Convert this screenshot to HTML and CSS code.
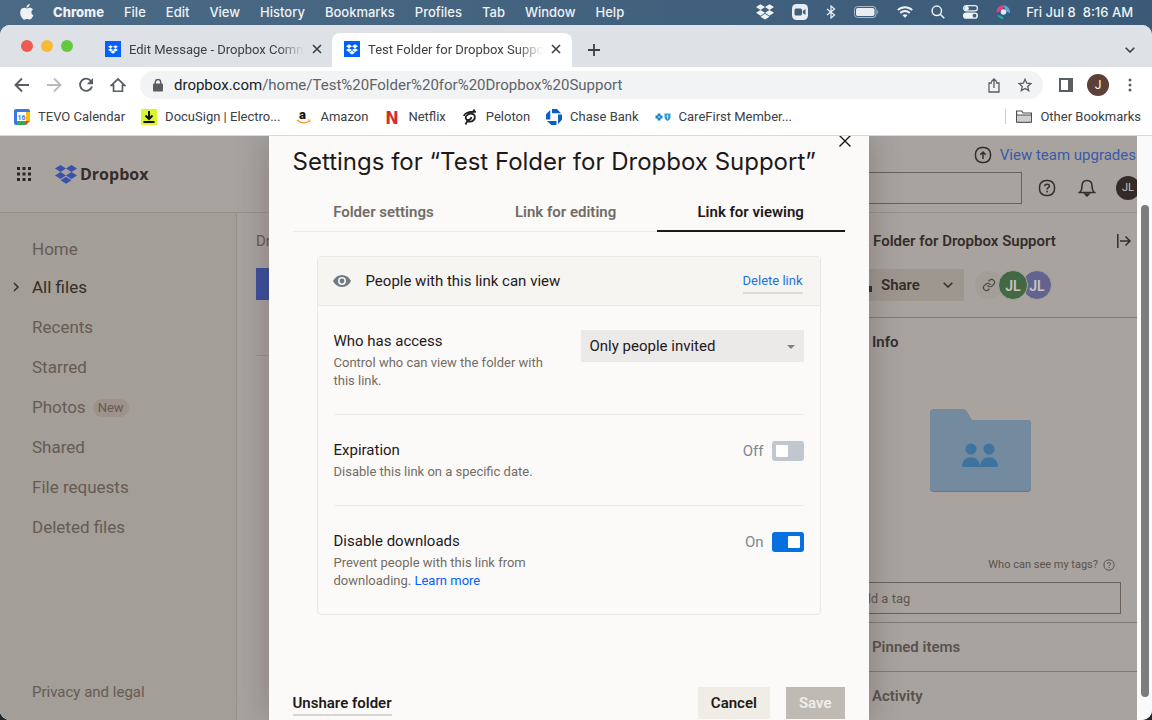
FILE: index.html
```html
<!DOCTYPE html>
<html lang="en">
<head>
<meta charset="utf-8">
<title>Test Folder for Dropbox Support</title>
<link rel="stylesheet" href="styles.css">
</head>
<body>
<svg class="defs" aria-hidden="true">
  <symbol id="dropbox" viewBox="0 0 44 38">
    <path d="M11 0L0 7l11 7 11-7zM33 0L22 7l11 7 11-7zM0 21l11 7 11-7-11-7zM33 14l-11 7 11 7 11-7zM11 30.500l11 7 11-7-11-7z"/>
  </symbol>
  <symbol id="cross" viewBox="0 0 12 12"><path d="M2 2l8 8M10 2l-8 8" fill="none" stroke="currentColor" stroke-width="1.600"/></symbol>
  <symbol id="help" viewBox="0 0 18 18">
    <rect x="1.500" y="1.500" width="15" height="15" rx="6.500" fill="none" stroke="currentColor" stroke-width="1.500"/>
    <path d="M6.600 7.200c.1-1.400 1.100-2 2.400-2s2.400.8 2.400 2c0 1.600-2.300 1.500-2.300 3.300" fill="none" stroke="currentColor" stroke-width="1.500"/>
    <rect x="8.300" y="11.800" width="1.600" height="1.600" fill="currentColor"/>
  </symbol>
</svg>

<header class="menubar">
  <svg class="apple" width="14" height="16" viewBox="0 0 14 16" fill="currentColor"><path d="M9.700 0c.1 1-.3 2-.9 2.600-.6.700-1.500 1.200-2.300 1.100-.1-.9.300-1.900.9-2.500C8 .5 9 .1 9.700 0zM13 5.400c-1 .6-1.600 1.600-1.600 2.800 0 1.300.8 2.500 2 3-.3.900-.7 1.700-1.200 2.400-.7 1-1.400 2-2.500 2s-1.400-.6-2.600-.6c-1.300 0-1.700.6-2.700.7-1.100 0-1.900-1.100-2.600-2.100C.3 11.600-.5 8 .9 5.700c.7-1.200 1.900-1.900 3.200-1.900 1.200 0 2 .7 3 .7s1.600-.7 3-.7c1.100 0 2.200.6 2.900 1.600z"/></svg>
  <nav class="menus"><b>Chrome</b><span>File</span><span>Edit</span><span>View</span><span>History</span><span>Bookmarks</span><span>Profiles</span><span>Tab</span><span>Window</span><span>Help</span></nav>
  <div class="status">
    <svg width="18" height="16" fill="currentColor"><use href="#dropbox"/></svg>
    <svg width="16" height="16" viewBox="0 0 16 16"><rect width="16" height="16" rx="4.500" fill="#e8edf1"/><rect x="2.500" y="4.500" width="7.500" height="7" rx="1.500" fill="#3f5f7c"/><path d="M10.800 7l2.700-2v6l-2.700-2z" fill="#3f5f7c"/></svg>
    <svg width="10" height="14" viewBox="0 0 10 14"><path d="M1 4l7.500 6L5 13V1l3.500 3L1 10" fill="none" stroke="currentColor" stroke-width="1.200"/></svg>
    <svg width="25" height="12" viewBox="0 0 25 12"><rect x=".5" y=".5" width="21.500" height="11" rx="3" fill="none" stroke="#a9b8c6"/><rect x="2" y="2" width="18.500" height="8" rx="1.800" fill="#e8edf1"/><path d="M23.300 4c1.300.6 1.300 3.400 0 4z" fill="#a9b8c6"/></svg>
    <svg width="16" height="12" viewBox="0 0 16 12" fill="none" stroke="currentColor" stroke-width="1.900"><path d="M.8 4.200c4-4 10.400-4 14.400 0M3.300 7c2.600-2.700 6.800-2.700 9.400 0"/><path d="M5.500 9.200c1.400-1.300 3.600-1.300 5 0L8 11.800z" fill="currentColor" stroke="none"/></svg>
    <svg width="14" height="14" viewBox="0 0 14 14" fill="none" stroke="currentColor" stroke-width="1.500"><circle cx="5.800" cy="5.800" r="4.700"/><path d="M9.200 9.200l4.100 4.100"/></svg>
    <svg width="15" height="14" viewBox="0 0 15 14"><rect x=".6" y=".6" width="13.800" height="5.200" rx="2.600" fill="none" stroke="currentColor" stroke-width="1.200"/><circle cx="3.600" cy="3.200" r="2.200" fill="currentColor"/><rect y="7.500" width="15" height="6.300" rx="3.100" fill="currentColor"/><circle cx="11.500" cy="10.700" r="1.900" fill="#3f5f7c"/></svg>
    <svg width="14" height="14" viewBox="0 0 14 14"><circle cx="7" cy="7" r="7" fill="#2d5a86"/><path d="M.5 8C-.5 3 4 0 8 .3c2 2-4 6-7.500 7.700z" fill="#d8457c"/><path d="M8 .3c4 .5 6.500 4 6 7.700-3 0-6-4-6-7.700z" fill="#5fa9c9"/><path d="M1 10c3 0 6 1 7 3.900C5.500 14.500 2 13 1 10z" fill="#2aa38a"/><circle cx="7.500" cy="7" r="2.800" fill="#dfe8f5"/></svg>
    <span class="clock"><span>Fri Jul 8</span><span>8:16 AM</span></span>
  </div>
</header>

<div class="window">
  <div class="tabstrip">
    <div class="lights"><i class="red"></i><i class="amber"></i><i class="green"></i></div>
    <div class="tab">
      <span class="favicon"><svg width="10" height="9" fill="#fff"><use href="#dropbox"/></svg></span>
      <span class="tab-title">Edit Message - Dropbox Community</span>
      <button class="plain" aria-label="Close tab"><svg width="12" height="12"><use href="#cross"/></svg></button>
    </div>
    <div class="tab active">
      <span class="favicon"><svg width="12" height="11" fill="#fff"><use href="#dropbox"/></svg></span>
      <span class="tab-title">Test Folder for Dropbox Support</span>
      <button class="plain" aria-label="Close tab"><svg width="12" height="12"><use href="#cross"/></svg></button>
    </div>
    <button class="plain newtab" aria-label="New tab"><svg width="12" height="12" viewBox="0 0 12 12"><path d="M6 0v12M0 6h12" stroke="currentColor" stroke-width="1.800"/></svg></button>
    <button class="plain tabsearch" aria-label="Search tabs"><svg width="10" height="6" viewBox="0 0 10 6"><path d="M.7.7L5 5 9.300.7" fill="none" stroke="currentColor" stroke-width="1.600"/></svg></button>
  </div>

  <div class="toolbar">
    <button class="plain" aria-label="Back"><svg width="16" height="16" viewBox="0 0 16 16" fill="none" stroke="currentColor" stroke-width="1.900"><path d="M15 8H2M8 1.500L1.500 8 8 14.500"/></svg></button>
    <button class="plain off" aria-label="Forward"><svg width="16" height="16" viewBox="0 0 16 16" fill="none" stroke="currentColor" stroke-width="1.900"><path d="M1 8h13M8 1.500L14.500 8 8 14.500"/></svg></button>
    <button class="plain" aria-label="Reload"><svg width="16" height="16" viewBox="0 0 16 16"><path d="M13.200 4.300A6.100 6.100 0 1 0 14 9.500" fill="none" stroke="currentColor" stroke-width="1.900"/><path d="M15 1v6.300H8.800z" fill="currentColor"/></svg></button>
    <button class="plain" aria-label="Home"><svg width="16" height="16" viewBox="0 0 18 17"><path d="M1.500 9L9 1.800 16.500 9H14v6.500H4V9z" fill="none" stroke="currentColor" stroke-width="1.900"/></svg></button>
    <div class="omnibox">
      <svg width="10" height="13" viewBox="0 0 10 13"><rect y="4.500" width="10" height="8" rx="1" fill="currentColor"/><path d="M2.300 5V3.200a2.700 2.700 0 0 1 5.400 0V5" fill="none" stroke="currentColor" stroke-width="1.400"/></svg>
      <span class="url"><b>dropbox.com</b>/home/Test%20Folder%20for%20Dropbox%20Support</span>
      <svg width="12" height="15" viewBox="0 0 12 15" fill="none" stroke="currentColor" stroke-width="1.300"><path d="M4 5H1v9h10V5H8M6 10V1.200M3.200 3.800L6 1l2.800 2.800"/></svg>
      <svg width="14" height="14" viewBox="0 0 14 14"><path d="M7 1.300l1.700 3.900 4.200.4-3.200 2.800 1 4.200L7 10.400l-3.700 2.200 1-4.200L1.100 5.600l4.200-.4z" fill="none" stroke="currentColor" stroke-width="1.300"/></svg>
    </div>
    <button class="plain" aria-label="Side panel"><svg width="14" height="14" viewBox="0 0 14 14"><rect x="1" y="1" width="12" height="12" fill="none" stroke="currentColor" stroke-width="2"/><path d="M9 1h4v12H9z" fill="currentColor"/></svg></button>
    <span class="profile">J</span>
    <button class="plain kebab" aria-label="Menu"><svg width="4" height="14" viewBox="0 0 4 14" fill="currentColor"><circle cx="2" cy="2" r="1.500"/><circle cx="2" cy="7" r="1.500"/><circle cx="2" cy="12" r="1.500"/></svg></button>
  </div>

  <nav class="bookmarks">
    <a href="#"><svg width="16" height="16" viewBox="0 0 16 16"><path d="M0 2q0-2 2-2h12q2 0 2 2v10h-4v4H2q-2 0-2-2z" fill="#3b78e7"/><path d="M12 3h4v9h-4z" fill="#fbbc04"/><path d="M3 12h9v4H3z" fill="#34a853"/><path d="M12 12h4l-4 4z" fill="#ea4335"/><path d="M3 3h9v9H3z" fill="#fff"/><text x="3.500" y="10.500" class="cal">16</text></svg>TEVO Calendar</a>
    <a href="#"><svg width="16" height="16" viewBox="0 0 16 16"><path d="M0 0h16v16H0z" fill="#dcf52c"/><path d="M8 2v7M4.500 6.500L8 10l3.500-3.500M2.500 13h11" fill="none" stroke="#111" stroke-width="2"/></svg>DocuSign | Electro...</a>
    <a href="#"><svg width="16" height="16" viewBox="0 0 16 16"><text x="3" y="10" class="amz">a</text><path d="M1 11c4 3.500 9 3.500 12.500 1" fill="none" stroke="#f7981d" stroke-width="1.400"/><path d="M12 11c1.500-.3 2.300 0 2 2" fill="none" stroke="#f7981d"/></svg>Amazon</a>
    <a href="#"><svg width="16" height="16" viewBox="0 0 16 16"><text x="8" y="15" text-anchor="middle" class="nfx">N</text></svg>Netflix</a>
    <a href="#"><svg width="16" height="16" viewBox="0 0 16 16" fill="none" stroke="#222" stroke-width="1.800"><path d="M3.500 15.500L6 10.500M11 3L12.500.5M6 12.500c5 1 7.500-2.500 6.800-5.500-1-2.500-4.500-3-6.800-1.500C3.500 7 3 9 4.500 10.500c2 1.300 4.500 0 5-2.500M2 7c0-2 3-4.500 12-4.200"/></svg>Peloton</a>
    <a href="#"><svg width="16" height="16" viewBox="0 0 16 16" fill="#0b5fc1"><path d="M6 0h5l4 4.200H6zM16 5.500v5.200L12 15V5.500zM10.500 16H5.300L1 12h9.500zM0 10.500V5.200L4.300 1v9.500z"/></svg>Chase Bank</a>
    <a href="#"><svg width="16" height="16" viewBox="0 0 16 16"><path d="M2.500 4.500h3v2h2v3h-2v2h-3v-2h-2v-3h2z" fill="#1f86c8"/><circle cx="4" cy="8" r="1" fill="#9fd0ee"/><path d="M9.500 4.500h6v3.500c0 2-1.500 3-3 4-1.500-1-3-2-3-4z" fill="#2e9bd8"/><path d="M12.500 5.500v4.500M11.300 7.200h2.400" stroke="#cfe8f7" stroke-width=".8"/></svg>CareFirst Member...</a>
    <a href="#" class="other"><svg width="16" height="13" viewBox="0 0 16 13"><path d="M.6 12V1h5l1.500 2h8.300v9z" fill="#fff" stroke="#4b4e52" stroke-width="1.200"/><path d="M1 5h14v7H1z" fill="#cfcfcf"/><path d="M.6 5h14.800M.6 12.300h14.800" stroke="#4b4e52"/></svg>Other Bookmarks</a>
  </nav>

  <div class="viewport">
    <div class="page">
      <header class="app-header">
        <svg width="14" height="14" viewBox="0 0 14 14" fill="#2b2622"><path d="M0 0h3v3H0zM5.500 0h3v3h-3zM11 0h3v3h-3zM0 5.500h3v3H0zM5.500 5.500h3v3h-3zM11 5.500h3v3h-3zM0 11h3v3H0zM5.500 11h3v3h-3zM11 11h3v3h-3z"/></svg>
        <a href="#" class="logo"><svg width="22" height="19" fill="#3a52a8"><use href="#dropbox"/></svg>Dropbox</a>
        <div class="header-right">
          <a href="#" class="upgrade"><svg width="18" height="18" viewBox="0 0 18 18" fill="none" stroke="#342e2a" stroke-width="1.500"><rect x="1.500" y="1.500" width="15" height="15" rx="6.500"/><path d="M9 13V6M6.300 8.700L9 6l2.700 2.700"/></svg>View team upgrades</a>
          <div class="tools">
            <input type="text" class="search" aria-label="Search">
            <svg width="18" height="18"><use href="#help"/></svg>
            <svg width="18" height="18" viewBox="0 0 18 18" fill="none" stroke="currentColor" stroke-width="1.500"><path d="M1.500 13.500h15c-2-1.500-2.500-3-2.500-6.500C14 3.500 12 1.500 9 1.500S4 3.500 4 7c0 3.500-.5 5-2.500 6.500z"/><path d="M7 15h4L9 17z" fill="currentColor"/></svg>
            <span class="avatar ink">JL</span>
          </div>
        </div>
      </header>
      <div class="app-body">
        <aside class="sidebar">
          <nav>
            <a href="#">Home</a>
            <a href="#" class="current"><svg width="6" height="10" viewBox="0 0 6 10"><path d="M1 1l4 4-4 4" fill="none" stroke="currentColor" stroke-width="1.500"/></svg>All files</a>
            <a href="#">Recents</a>
            <a href="#">Starred</a>
            <a href="#">Photos<span class="new">New</span></a>
            <a href="#">Shared</a>
            <a href="#">File requests</a>
            <a href="#">Deleted files</a>
          </nav>
          <a href="#" class="legal">Privacy and legal</a>
        </aside>
        <main class="files">
          <div class="crumb">Dropbox</div>
          <button class="create">Create</button>
          <hr>
        </main>
        <aside class="details">
          <div class="details-title"><h2>Test Folder for Dropbox Support</h2>
            <svg width="14" height="14" viewBox="0 0 14 14" fill="none" stroke="currentColor" stroke-width="1.500"><path d="M.8 0v14M3 7h10M8.500 2.500L13 7l-4.500 4.500"/></svg></div>
          <div class="share-row">
            <button class="share"><svg width="14" height="14" viewBox="0 0 14 14" fill="currentColor"><circle cx="7" cy="3" r="3"/><path d="M1 14V8h13v6z"/></svg><span>Share</span><svg width="10" height="6" viewBox="0 0 10 6"><path d="M.7.7L5 5 9.300.7" fill="none" stroke="currentColor" stroke-width="1.500"/></svg></button>
            <div class="people">
              <span class="person linkchip"><svg width="14" height="14" viewBox="0 0 24 24" fill="none" stroke="#4b443f" stroke-width="2" stroke-linecap="round"><path d="M10 13a5 5 0 0 0 7.500.5l3-3a5 5 0 0 0-7-7l-1.700 1.700"/><path d="M14 11a5 5 0 0 0-7.500-.5l-3 3a5 5 0 0 0 7 7l1.700-1.700"/></svg></span>
              <span class="person green">JL</span><span class="person violet">JL</span>
            </div>
          </div>
          <section class="info">
            <h3>Info</h3>
            <svg class="folder" width="104" height="86" viewBox="0 0 104 86"><path d="M1 5.500Q1 1 5.500 1H33q3.500 0 5 3l4.500 8H98q4 0 4 4v64q0 4-4 4H5q-4 0-4-4z" fill="#5a7b94"/><path d="M1 5.500Q1 1 5.500 1H33q3.500 0 5 3l4.500 8H98q4 0 4 4v63q0 4-4 4H5q-4 0-4-4z" fill="#738a9f"/><g fill="#3e739f"><circle cx="42" cy="41" r="5.500"/><circle cx="60" cy="41" r="5.500"/><path d="M33 59c0-13 18-13 18 0 0-13 18-13 18 0z"/></g></svg>
            <div class="tag-help">Who can see my tags?<svg width="12" height="12"><use href="#help"/></svg></div>
            <input type="text" class="tag" placeholder="Add a tag" aria-label="Add a tag">
          </section>
          <h3 class="fold">Pinned items</h3>
          <h3 class="fold">Activity</h3>
        </aside>
      </div>

      <div class="overlay">
        <div class="modal" role="dialog" aria-labelledby="dlg-title">
          <button class="plain close" aria-label="Close"><svg width="14" height="14" viewBox="0 0 14 14"><path d="M1.500 1.500l11 11M12.500 1.500l-11 11" stroke="currentColor" stroke-width="1.400"/></svg></button>
          <h1 id="dlg-title">Settings for “Test Folder for Dropbox Support”</h1>
          <div class="tabs" role="tablist">
            <button role="tab">Folder settings</button>
            <button role="tab">Link for editing</button>
            <button role="tab" aria-selected="true">Link for viewing</button>
          </div>
          <div class="card">
            <div class="card-head">
              <svg width="18" height="12" viewBox="0 0 18 12"><path d="M0 6c4-8 14-8 18 0-4 8-14 8-18 0z" fill="#6f7a86"/><circle cx="9" cy="6" r="4" fill="#f6f5f2"/><circle cx="9" cy="6" r="2.400" fill="#6f7a86"/></svg>
              <span>People with this link can view</span>
              <a href="#" class="delete">Delete link</a>
            </div>
            <div class="row">
              <div class="copy"><label for="access">Who has access</label><p>Control who can view the folder with this link.</p></div>
              <div class="select"><select id="access"><option>Only people invited</option></select></div>
            </div>
            <div class="row">
              <div class="copy"><label for="expires">Expiration</label><p>Disable this link on a specific date.</p></div>
              <div class="switch"><span>Off</span><input type="checkbox" id="expires"></div>
            </div>
            <div class="row">
              <div class="copy"><label for="downloads">Disable downloads</label><p>Prevent people with this link from downloading. <a href="#">Learn more</a></p></div>
              <div class="switch"><span>On</span><input type="checkbox" id="downloads" checked></div>
            </div>
          </div>
          <footer><button class="unshare">Unshare folder</button><button class="btn cancel">Cancel</button><button class="btn save" disabled>Save</button></footer>
        </div>
      </div>
    </div>
    <div class="scrollbar"><i></i></div>
  </div>
</div>
</body>
</html>
```
FILE: styles.css
```css
* { box-sizing: border-box; }
html, body { height: 100%; }
body {
  margin: 0;
  display: flex;
  flex-direction: column;
  overflow: hidden;
  background: #20282c;
  font-family: Roboto, "Liberation Sans", sans-serif;
}
h1, h2, h3, p { margin: 0; }
a { color: inherit; text-decoration: none; }
button, input, select { font: inherit; color: inherit; }
svg { display: block; flex: none; }
.defs { position: absolute; width: 0; height: 0; }
.plain { display: flex; padding: 0; border: 0; background: none; }

/* System menu bar */
.menubar {
  flex: none;
  display: flex;
  align-items: center;
  height: 35px;
  margin-bottom: -10px;
  padding: 0 19px 12px 20px;
  background: linear-gradient(90deg, #4b6a85, #3a5a78);
  color: #eef2f5;
  font: 500 13px Inter, sans-serif;
}
.menus { display: flex; gap: 20px; margin-left: 19px; }
.menus b { font-weight: 800; }
.status { display: flex; align-items: center; gap: 18px; margin-left: auto; }
.clock { display: flex; gap: 7px; margin-left: -2px; white-space: nowrap; }

/* Browser window */
.window {
  flex: 1;
  min-height: 0;
  display: flex;
  flex-direction: column;
  overflow: hidden;
  border-radius: 10px;
  background: #fff;
}
.tabstrip {
  flex: none;
  display: flex;
  align-items: flex-end;
  height: 42px;
  padding: 0 17px 0 21px;
  background: #dee1e6;
  color: #3c4043;
}
.lights { display: flex; gap: 8px; margin-bottom: 15px; }
.lights i { width: 12px; height: 12px; border-radius: 50%; }
.red { background: #ed5b52; }
.amber { background: #f6ba35; }
.green { background: #62c93f; }
.tab { display: flex; align-items: center; width: 240px; height: 34px; padding: 0 10px 2px 12px; font-size: 13px; }
.lights + .tab { margin-left: 20px; }
.tab.active { margin-left: -1px; border-radius: 8px 8px 0 0; background: #fff; }
.favicon { flex: none; display: grid; place-items: center; width: 16px; height: 16px; background: #0061fe; }
.tab-title {
  flex: 1;
  margin: 0 7px 0 8px;
  overflow: hidden;
  white-space: nowrap;
  -webkit-mask-image: linear-gradient(90deg, #000 85%, transparent);
  mask-image: linear-gradient(90deg, #000 85%, transparent);
}
.newtab { margin: 0 0 11px 16px; }
.tabsearch { margin: 0 0 14px auto; }

.toolbar {
  flex: none;
  display: flex;
  align-items: center;
  gap: 16px;
  height: 36px;
  padding: 0 20px 0 14px;
  color: #5a5e62;
}
.toolbar .off { color: #b9bbbe; }
.omnibox {
  flex: 1;
  display: flex;
  align-items: center;
  gap: 18px;
  height: 28px;
  margin-left: -2px;
  padding: 0 11px 0 13px;
  border-radius: 14px;
  background: #f1f3f4;
  font-size: 15px;
}
.url { flex: 1; margin-left: -7px; color: #5f6368; white-space: nowrap; }
.url b { color: #202124; font-weight: 400; }
.profile {
  display: grid;
  place-items: center;
  width: 22px;
  height: 22px;
  margin-left: -2px;
  border-radius: 50%;
  background: #5d4037;
  color: #fff;
  font-size: 12px;
}
.kebab { margin-left: 3px; }
.bookmarks {
  flex: none;
  display: flex;
  align-items: center;
  gap: 16px;
  height: 33px;
  padding: 0 11px 5px 14px;
  border-bottom: 1px solid #d9d9d9;
  color: #3c4043;
  font-size: 13px;
  white-space: nowrap;
}
.bookmarks a { display: flex; align-items: center; gap: 8px; }
.bookmarks .other { margin-left: auto; padding-left: 10px; border-left: 1px solid #c9cbcf; }
.cal { font: 700 7px Roboto, sans-serif; fill: #3b78e7; }
.amz { font: 900 13px Roboto, sans-serif; fill: #111; }
.nfx { font: 700 18px "Liberation Sans Narrow", "DejaVu Sans Condensed", sans-serif; fill: #d22f2f; }

/* Page */
.viewport { flex: 1; min-height: 0; display: flex; background: #fbfafa; }
.page {
  position: relative;
  flex: 1;
  min-width: 0;
  display: flex;
  flex-direction: column;
  overflow: hidden;
  background: #a8a39f;
  color: #342e2a;
}
.scrollbar { flex: none; width: 15px; padding: 69px 3px 23px 4px; }
.scrollbar i { display: block; height: 100%; border-radius: 4px; background: #7d7d7d; }

.app-header {
  flex: none;
  display: flex;
  align-items: center;
  height: 77px;
  padding-left: 17px;
  border-bottom: 1px solid #989189;
}
.logo { display: flex; align-items: center; gap: 3px; margin-left: 24px; font: 700 16px "Open Sans", sans-serif; }
.header-right {
  flex: 1;
  display: flex;
  flex-direction: column;
  align-items: flex-end;
  gap: 7px;
}
.upgrade { display: flex; align-items: center; gap: 8px; height: 20px; padding-right: 1px; color: #3a5aa8; font-size: 15px; }
.tools { display: flex; align-items: center; gap: 20px; margin-right: -3px; }
.tools .search { width: 400px; height: 32px; margin-right: -4px; border: 1px solid #6a6058; background: none; }
.tools svg + svg { margin-left: 2px; }
.avatar { display: grid; place-items: center; width: 24px; height: 24px; border-radius: 50%; }
.ink { background: #342b28; color: #c5bfba; font-size: 11px; }

.app-body { flex: 1; min-height: 0; display: flex; }
.sidebar {
  flex: none;
  display: flex;
  flex-direction: column;
  width: 237px;
  padding: 18px 0;
  border-right: 1px solid #999289;
  background: #a39e97;
  color: #655b54;
  font-size: 17px;
}
.sidebar nav a { display: flex; align-items: center; height: 40px; padding-left: 32px; }
.sidebar nav a:first-child { height: 36px; }
.sidebar nav a.current { gap: 13px; padding-left: 13px; color: #342e2a; }
.new { margin: 2px 0 0 7px; padding: 0 5px; border-radius: 9px; background: #9d928c; font-size: 13px; line-height: 18px; }
.legal { margin-top: auto; padding-left: 32px; font-size: 15px; line-height: 20px; }
.files { flex: 1; min-width: 0; padding: 18px 0 0 19px; color: #655b54; font-size: 15px; overflow: hidden; }
.crumb { line-height: 20px; }
.create { display: block; width: 120px; height: 32px; margin-top: 17px; border: 0; background: #3c4f9c; color: #fff; }
.files hr { margin: 55px 0 0; border: 0; border-top: 1px solid #989189; }

.details { flex: none; width: 299px; font-weight: 500; }
.details h2, .details h3 { font-size: 15px; font-weight: 600; line-height: 20px; }
.details-title { display: flex; align-items: center; justify-content: space-between; padding: 18px 6px 0 2px; white-space: nowrap; }
.share-row { display: flex; gap: 10px; padding: 18px 0 16px; }
.share {
  display: flex;
  align-items: center;
  gap: 9px;
  width: 126px;
  height: 32px;
  padding: 0 11px 0 20px;
  border: 0;
  background: #9e978f;
  font-size: 15px;
  font-weight: 600;
}
.share span { flex: 1; text-align: left; }
.people { display: flex; align-items: center; }
.person {
  display: grid;
  place-items: center;
  width: 30px;
  height: 30px;
  margin-right: -6px;
  padding-top: 2px;
  border: 1px solid #a8a39f;
  border-radius: 50%;
  color: #c9c4c0;
  font-size: 14px;
  font-weight: 600;
}
.linkchip { padding: 0; background: #a39e97; }
.green.person { z-index: 1; background: #426943; }
.violet { background: #62638e; }
.info { display: flex; flex-direction: column; padding: 14px 16px 8px 34px; border-top: 1px solid #827b73; }
.folder { margin: 56px 0 0 57px; }
.tag-help { display: flex; align-items: center; gap: 5px; align-self: flex-end; margin: 61px 6px 0 0; color: #5a524b; font-size: 11px; font-weight: 400; line-height: 20px; }
.tag { height: 32px; margin: 7px 0 0 -27px; padding: 0 9px; border: 1px solid #6a6058; background: none; font-size: 13px; font-weight: 400; }
.tag::placeholder { color: #5f5750; opacity: 1; }
.fold { padding: 14px 0 14px 34px; border-top: 1px solid #827b73; color: #5a524b; }

/* Settings dialog */
.overlay { position: absolute; inset: 0; display: flex; justify-content: center; }
.modal {
  display: flex;
  flex-direction: column;
  width: 600px;
  padding: 0 24px;
  background: #fbfaf9;
  box-shadow: 0 0 32px rgba(60, 40, 50, .3);
  color: #1e1919;
  font-size: 15px;
}
.close { align-self: flex-end; height: 12px; margin: -2px -7px 0 0; }
.modal h1 { font: 400 24px/32px Inter, sans-serif; white-space: nowrap; }
.tabs { display: flex; margin-top: 14px; border-bottom: 1px solid #eceae7; }
.tabs button {
  flex: auto;
  height: 40px;
  margin-bottom: -1px;
  padding: 2px 0 0;
  border: 0;
  border-bottom: 2px solid transparent;
  background: none;
  color: #736c64;
  font-weight: 600;
}
.tabs [aria-selected] { border-color: #1e1919; color: #1e1919; }
.card { margin: 24px 24px 0; border: 1px solid #eae8e4; border-radius: 4px; }
.card-head { display: flex; align-items: center; gap: 15px; height: 49px; padding: 0 17px 0 15px; border-bottom: 1px solid #eae8e4; background: #f6f5f2; }
.delete { margin: 2px 0 0 auto; border-bottom: 2px solid #dddbd8; color: #1a73dc; font-size: 13px; line-height: 22px; }
.row { display: flex; justify-content: space-between; margin: 0 16px; padding: 25px 0 24px; }
.row + .row { border-top: 1px solid #ecebe8; }
.copy { width: 216px; }
.copy label { display: block; margin-bottom: 3px; line-height: 20px; }
.copy p { color: #736c64; font-size: 13px; line-height: 18px; }
.copy a { color: #0061fe; }
.select { position: relative; height: 32px; margin-top: -1px; }
.select::after {
  content: "";
  position: absolute;
  top: 15px;
  right: 9px;
  border: 4px solid transparent;
  border-top-color: #7b828c;
  border-bottom: 0;
}
.select select { appearance: none; width: 223px; height: 32px; padding: 0 9px; border: 0; background: #ebeae9; }
.switch { display: flex; align-items: center; gap: 8px; height: 22px; color: #7d8793; }
.switch input { appearance: none; display: flex; width: 32px; height: 20px; margin: 0; padding: 4px; border-radius: 3px; background: #c1c7cf; }
.switch input::before { content: ""; width: 12px; height: 12px; border-radius: 1px; background: #fff; }
.switch input:checked { justify-content: flex-end; background: #0670e0; }
.modal footer { display: flex; align-items: center; gap: 16px; margin-top: 72px; font-weight: 600; }
.unshare { margin: 2px auto 0 0; padding: 0; border: 0; border-bottom: 2px solid #d8d5d0; background: none; font-weight: 600; line-height: 22px; }
.btn { height: 32px; padding: 0 13px; border: 0; font-weight: 600; }
.cancel { background: #f0ede7; }
.save { background: #bfbab4; color: #f0eeeb; }
```
